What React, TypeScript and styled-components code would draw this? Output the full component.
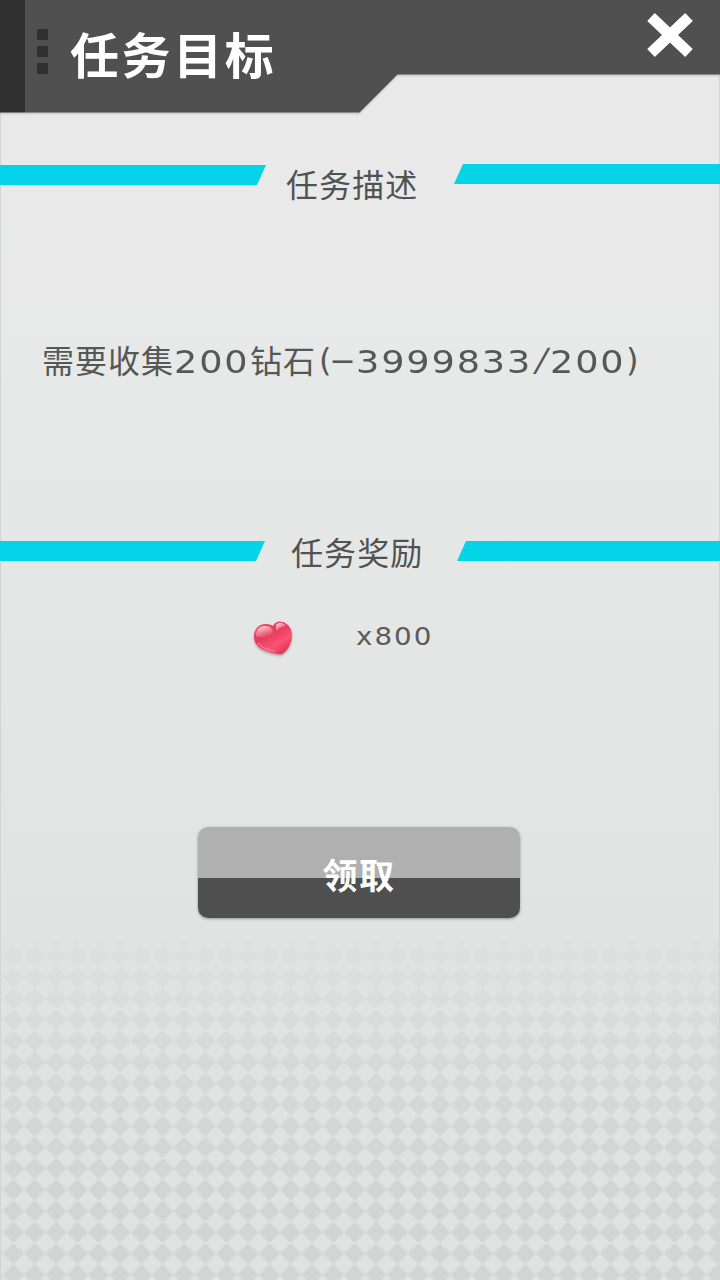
import React from "react";
import styled, { createGlobalStyle } from "styled-components";

const GlobalStyle = createGlobalStyle`
  body {
    margin: 0;
    background: #e1e4e3;
    font-family: "Noto Sans CJK SC", sans-serif;
  }
  button { font: inherit; border: 0; padding: 0; }
`;

const Screen = styled.main`
  box-sizing: border-box;
  width: 720px;
  height: 1280px;
  overflow: hidden;
  display: flex;
  flex-direction: column;
  background: linear-gradient(#eaeaea 0, #e9e9e9 220px, #e7e9e8 380px, #e4e6e5 700px, #e0e3e2 940px, #dfe2e1 100%);
  box-shadow: inset 1px 0 #d2d5d4, inset -1px 0 #d2d5d4;
`;

const HeaderShadow = styled.header`
  height: 113px;
  filter: drop-shadow(0 1px 1px rgba(0, 0, 0, 0.2));
`;

const Header = styled.div`
  height: 113px;
  display: flex;
  background: linear-gradient(90deg, #303030 25px, #505050 25px);
  clip-path: polygon(0 0, 100% 0, 100% 74.5px, 397.5px 74.5px, 359.5px 112.5px, 0 112.5px);
`;

const Grip = styled.div`
  display: flex;
  flex-direction: column;
  gap: 6px;
  padding: 29px 0 0 37px;
`;

const GripDot = styled.i`
  width: 11px;
  height: 11px;
  background: #303030;
`;

const Title = styled.h1`
  margin: 16px 0 0 22px;
  font-size: 49px;
  line-height: 74px;
  font-weight: 700;
  letter-spacing: 2.6px;
  color: #fff;
  white-space: nowrap;
`;

const CloseButton = styled.button`
  width: 48px;
  height: 46px;
  margin: 12px 26px 0 auto;
  background: none;
  svg { display: block; }
`;

const SectionHeading = styled.div<{ $top: number }>`
  height: 44px;
  margin-top: ${(p) => p.$top}px;
  display: flex;
  align-items: flex-start;
`;

const Stripe = styled.div<{ $side: "left" | "right"; $width: number; $drop: number }>`
  width: ${(p) => p.$width}px;
  height: 20px;
  flex: none;
  margin-top: ${(p) => p.$drop}px;
  background: #05d4e8;
  clip-path: ${(p) =>
    p.$side === "left"
      ? "polygon(0 0, 100% 0, calc(100% - 9px) 100%, 0 100%)"
      : "polygon(9px 0, 100% 0, 100% 100%, 0 100%)"};
`;

const SectionTitle = styled.h2<{ $indent: number }>`
  flex: 1;
  margin: 0;
  padding-left: ${(p) => p.$indent}px;
  font-size: 32px;
  line-height: 40px;
  font-weight: 400;
  letter-spacing: 1.1px;
  color: #505352;
  white-space: nowrap;
`;

const Description = styled.p`
  height: 48px;
  margin: 131px 0 0 42px;
  display: flex;
  font-size: 32px;
  line-height: 48px;
  color: #555857;
  white-space: nowrap;
`;

const Words = styled.span<{ $width: number }>`
  width: ${(p) => p.$width}px;
  flex: none;
  line-height: 43px;
  letter-spacing: 1px;
`;

const Digits = styled.span<{ $width: number }>`
  width: ${(p) => p.$width}px;
  flex: none;
  font-family: "DejaVu Sans", sans-serif;
  font-size: 32.5px;
  letter-spacing: 1.65px;
  transform: scaleX(1.127);
  transform-origin: left;
`;

const Mark = styled.span<{ $width: number; $shape?: string }>`
  width: ${(p) => p.$width}px;
  flex: none;
  font-family: "DejaVu Sans", sans-serif;
  font-size: 32px;
  line-height: 45px;
  transform: ${(p) => p.$shape ?? "none"};
  transform-origin: left;
`;

const Reward = styled.div`
  height: 44px;
  margin: 41px 0 0 251px;
  display: flex;
  align-items: center;
`;

const Amount = styled.span`
  margin-left: 60px;
  font-family: "DejaVu Sans", sans-serif;
  font-size: 25px;
  line-height: 44px;
  letter-spacing: 1.8px;
  transform: translateY(-1px) scaleX(1.11);
  transform-origin: left;
  color: #5a5d5c;
`;

const ClaimButton = styled.button`
  width: 322px;
  height: 91px;
  flex: none;
  margin: 167px 0 1px 198px;
  padding-top: 2px;
  border-radius: 10px;
  background: linear-gradient(#b0b0b0 50.5px, #4f4f4f 51px);
  box-shadow: 0 1px 3px rgba(0, 0, 0, 0.35);
  color: #fff;
  font-size: 35px;
  line-height: 88px;
  font-weight: 700;
  letter-spacing: 1.5px;
`;

const Checker = styled.svg`
  display: block;
  width: 720px;
  flex: 1;
  margin-top: 22px;
`;

function Heart() {
  return (
    <svg width="45" height="42" viewBox="0 0 45 42">
      <defs>
        <linearGradient id="heartBody" x1="0.1" y1="0" x2="0.8" y2="1">
          <stop offset="0" stopColor="#f2506e" />
          <stop offset="0.4" stopColor="#e63a5c" />
          <stop offset="0.7" stopColor="#fa5474" />
          <stop offset="1" stopColor="#e02f52" />
        </linearGradient>
        <linearGradient id="heartGloss" x1="0.2" y1="0" x2="0.7" y2="1">
          <stop offset="0" stopColor="#fff" stopOpacity="0.8" />
          <stop offset="1" stopColor="#ffb1c0" stopOpacity="0.05" />
        </linearGradient>
        <filter id="heartShadow" x="-20%" y="-20%" width="140%" height="150%">
          <feDropShadow dx="0" dy="1.5" stdDeviation="1.2" floodOpacity="0.3" />
        </filter>
        <filter id="glossSoft" x="-20%" y="-20%" width="140%" height="140%"><feGaussianBlur stdDeviation="0.7" /></filter>
      </defs>
      <path filter="url(#heartShadow)" fill="url(#heartBody)" d="M22 9C23 6 26 4.500 29 4.500C36 5 41 11 41 18C41 26 37 33 32 36.500C30 38 26 37 21 36C12 34 3 29 3 20C3 12 8 7 14 7C17 7 20 7.500 22 9Z" />
      <g filter="url(#glossSoft)">
        <path fill="url(#heartGloss)" d="M5 19C5 12 9 9 14 9C19 9 22 12 22 15C20 20 12 22 5 19Z" />
        <path fill="url(#heartGloss)" d="M25 8C28 4 33 6 35 9C32 9 28 11 25 14Z" />
        <path fill="none" stroke="#ff9cae" strokeWidth="1.500" opacity="0.500" d="M7 26Q14 34 25 34" />
      </g>
    </svg>
  );
}

export default function App() {
  return (
    <>
      <GlobalStyle />
      <Screen>
        <HeaderShadow>
          <Header>
            <Grip><GripDot /><GripDot /><GripDot /></Grip>
            <Title>任务目标</Title>
            <CloseButton aria-label="关闭">
              <svg width="48" height="46" viewBox="0 0 48 46">
                <path d="M5 5L43 41M43 5L5 41" fill="none" stroke="#fff" strokeWidth="11" />
              </svg>
            </CloseButton>
          </Header>
        </HeaderShadow>

        <SectionHeading $top={50}>
          <Stripe $side="left" $width={266} $drop={2} />
          <SectionTitle $indent={20}>任务描述</SectionTitle>
          <Stripe $side="right" $width={266} $drop={1} />
        </SectionHeading>

        <Description>
          <Words $width={132}>需要收集</Words>
          <Digits $width={76}>200</Digits>
          <Words $width={69}>钻石</Words>
          <Mark $width={10}>(</Mark>
          <Mark $width={27} $shape="scaleX(2.35)">-</Mark>
          <Digits $width={180}>3999833</Digits>
          <Mark $width={14} $shape="skewX(-14deg)">/</Mark>
          <Digits $width={76}>200</Digits>
          <Mark $width={12}>)</Mark>
        </Description>

        <SectionHeading $top={145}>
          <Stripe $side="left" $width={265} $drop={10} />
          <SectionTitle $indent={26}>任务奖励</SectionTitle>
          <Stripe $side="right" $width={263} $drop={10} />
        </SectionHeading>

        <Reward>
          <Heart />
          <Amount>x800</Amount>
        </Reward>

        <ClaimButton>领取</ClaimButton>

        <Checker viewBox="0 0 720 340" preserveAspectRatio="none">
          <defs>
            <pattern id="diamonds" x="2.7" y="4.2" width="21.33" height="21.33" patternUnits="userSpaceOnUse">
              <path d="M10.66 0L21.33 10.66L10.66 21.33L0 10.66Z" fill="#d3d5d4" />
            </pattern>
            <linearGradient id="fade" x1="0" y1="0" x2="0" y2="1">
              <stop offset="0" stopColor="#fff" stopOpacity="0.15" />
              <stop offset="0.35" stopColor="#fff" stopOpacity="0.7" />
              <stop offset="0.7" stopColor="#fff" stopOpacity="1" />
            </linearGradient>
            <mask id="fadeMask"><rect width="720" height="340" fill="url(#fade)" /></mask>
          </defs>
          <rect x="1" width="718" height="340" fill="url(#diamonds)" mask="url(#fadeMask)" />
        </Checker>
      </Screen>
    </>
  );
}
